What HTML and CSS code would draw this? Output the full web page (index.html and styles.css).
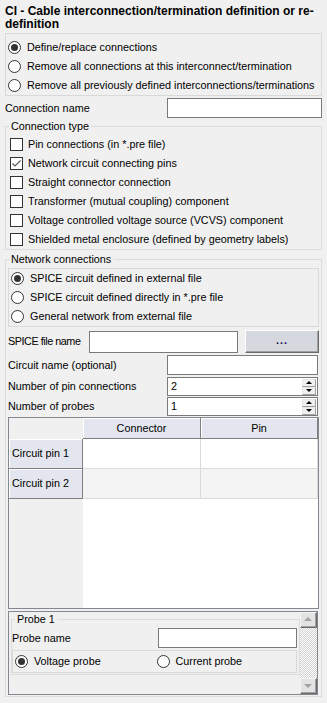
FILE: index.html
```html
<!DOCTYPE html>
<html lang="en">
<head>
  <meta charset="UTF-8" />
  <meta name="viewport" content="width=device-width, initial-scale=1" />
  <title>CI - Cable interconnection/termination</title>
  <link rel="stylesheet" href="styles.css">
</head>
<body>
<div class="panel">
  <h1 class="title">CI - Cable interconnection/termination definition or re-<br>definition</h1>

  <!-- Action -->
  <div class="choice-box mode-box">
    <div class="choice"><span class="radio on"></span>Define/replace connections</div>
    <div class="choice"><span class="radio"></span>Remove all connections at this interconnect/termination</div>
    <div class="choice"><span class="radio"></span>Remove all previously defined interconnections/terminations</div>
  </div>

  <div class="form-row name-row">
    <span class="name-label">Connection name</span>
    <input class="text-input" type="text">
  </div>

  <!-- Connection type -->
  <fieldset class="group type-group">
    <legend>Connection type</legend>
    <div class="choice"><span class="check"></span>Pin connections (in *.pre file)</div>
    <div class="choice">
      <span class="check"><svg width="11" height="11" viewBox="0 0 11 11"><polyline points="1.5,5.5 4,8 9.5,2.5" fill="none" stroke="#555" stroke-width="1.1"/></svg></span>Network circuit connecting pins
    </div>
    <div class="choice"><span class="check"></span>Straight connector connection</div>
    <div class="choice"><span class="check"></span>Transformer (mutual coupling) component</div>
    <div class="choice"><span class="check"></span>Voltage controlled voltage source (VCVS) component</div>
    <div class="choice"><span class="check"></span>Shielded metal enclosure (defined by geometry labels)</div>
  </fieldset>

  <!-- Network connections -->
  <fieldset class="group network-group">
    <legend>Network connections</legend>
    <div class="choice-box">
      <div class="choice"><span class="radio on"></span>SPICE circuit defined in external file</div>
      <div class="choice"><span class="radio"></span>SPICE circuit defined directly in *.pre file</div>
      <div class="choice"><span class="radio"></span>General network from external file</div>
    </div>

    <div class="form-row file-row">
      <span class="file-label">SPICE file name</span>
      <input class="text-input file-input" type="text">
      <button class="browse" type="button">...</button>
    </div>
    <div class="form-row circuit-row">
      <span class="form-label">Circuit name (optional)</span>
      <input class="text-input" type="text">
    </div>
    <div class="form-row spin-row">
      <span class="form-label">Number of pin connections</span>
      <div class="spin">
        <span class="spin-value">2</span>
        <span class="spin-arrows"><span class="spin-btn up"></span><span class="spin-btn down"></span></span>
      </div>
    </div>
    <div class="form-row spin-row">
      <span class="form-label">Number of probes</span>
      <div class="spin">
        <span class="spin-value">1</span>
        <span class="spin-arrows"><span class="spin-btn up"></span><span class="spin-btn down"></span></span>
      </div>
    </div>

    <div class="pin-grid">
      <div class="corner"></div>
      <div class="col-head">Connector</div>
      <div class="col-head">Pin</div>
      <div class="row-head">Circuit pin 1</div>
      <div class="cell"></div>
      <div class="cell"></div>
      <div class="row-head">Circuit pin 2</div>
      <div class="cell alt"></div>
      <div class="cell alt"></div>
      <div class="filler-head"></div>
      <div class="filler"></div>
    </div>

    <div class="probe-frame">
      <div class="probe-view">
        <fieldset class="group probe-group">
          <legend>Probe 1</legend>
          <div class="form-row probe-row">
            <span class="probe-label">Probe name</span>
            <input class="text-input" type="text">
          </div>
          <div class="choice-box probe-kind">
            <div class="choice"><span class="radio on"></span>Voltage probe</div>
            <div class="choice"><span class="radio"></span>Current probe</div>
          </div>
        </fieldset>
      </div>
      <div class="scrollbar">
        <span class="scroll-btn up"></span>
        <span class="scroll-track"></span>
        <span class="scroll-btn down"></span>
      </div>
    </div>
  </fieldset>
</div>
</body>
</html>
```
FILE: styles.css
```css
body {
  margin: 0;
  background: #f0f0f0;
  color: #000;
  font: 10.8px/13px "Liberation Sans", Arial, sans-serif;
}

.panel {
  padding: 0 5px;
}

.title {
  margin: 0 0 2px;
  padding-top: 5px;
  font-size: 12px;
  line-height: 13px;
  font-weight: bold;
}

/* radio / checkbox rows */
.choice-box {
  border: 1px solid #d9d9d9;
}

.mode-box {
  padding-top: 4px;
}

.choice {
  display: flex;
  align-items: center;
  height: 19px;
  white-space: nowrap;
}

.radio {
  position: relative;
  flex: none;
  box-sizing: border-box;
  width: 13px;
  height: 13px;
  margin: 0 6px 0 2px;
  border: 1px solid #333;
  border-radius: 50%;
  background: #fff;
}

.radio.on::after {
  content: "";
  position: absolute;
  left: 2px;
  top: 2px;
  width: 7px;
  height: 7px;
  border-radius: 50%;
  background: #333;
}

.check {
  flex: none;
  box-sizing: border-box;
  width: 13px;
  height: 13px;
  margin: 0 5px 0 2px;
  border: 1px solid #333;
  background: #fff;
}

.check svg {
  display: block;
}

/* group boxes */
.group {
  margin: 0;
  min-width: 0;
  border: 1px solid #dcdcdc;
}

.group legend {
  margin-left: 3px;
  padding: 0 2px;
  line-height: 14px;
}

.type-group {
  margin-top: 1px;
  padding: 2px 0 0 2px;
}

.type-group legend {
  margin-left: 1px;
}

.network-group {
  margin-top: 2px;
  padding: 2px 2px 1px;
}

.network-group legend {
  margin-left: 1px;
}

/* form rows */
.form-row {
  display: flex;
  align-items: center;
}

.name-row {
  height: 20px;
  margin-top: 2px;
}

.name-label {
  width: 162px;
  flex: none;
}

.form-label {
  width: 159px;
  flex: none;
}

.text-input {
  flex: 1;
  min-width: 0;
  width: 0;
  box-sizing: border-box;
  height: 100%;
  margin: 0;
  padding: 0 3px;
  border: 1px solid #7a7a7a;
  border-radius: 0;
  background: #fff;
  font: inherit;
}

.file-row {
  height: 23px;
  margin-top: 3px;
  align-items: flex-end;
}

.file-label {
  width: 81px;
  flex: none;
  align-self: center;
  white-space: nowrap;
  letter-spacing: -0.45px;
}

.file-input {
  flex: none;
  width: 149px;
  height: 22px;
}

.browse {
  flex: none;
  box-sizing: border-box;
  width: 74px;
  height: 23px;
  margin: 0 1px 0 7px;
  padding: 0 0 3px;
  border: 1px solid;
  border-color: #fff #6a6a6a #6a6a6a #fff;
  box-shadow: inset -1px -1px #a0a0a0;
  background: #d5d8df;
  color: #10104a;
  font: bold 10.8px "Liberation Sans", Arial, sans-serif;
  letter-spacing: 1px;
}

.circuit-row {
  height: 20px;
  margin-top: 2px;
}

.circuit-row .text-input,
.spin {
  margin-right: 1px;
}

.spin-row {
  height: 19px;
  margin-top: 1px;
}

.circuit-row + .spin-row {
  margin-top: 2px;
}

.spin {
  flex: 1;
  display: flex;
  align-items: center;
  box-sizing: border-box;
  height: 100%;
  padding-left: 3px;
  border: 1px solid #7a7a7a;
  background: #fff;
}

.spin-arrows {
  display: flex;
  flex-direction: column;
  margin-left: auto;
  margin-right: 1px;
}

.spin-btn {
  position: relative;
  box-sizing: border-box;
  width: 14px;
  height: 8px;
  border: 1px solid;
  border-color: #e8e8e8 #a0a0a0 #a0a0a0 #e8e8e8;
  background: #f0f0f0;
}

.spin-btn::after {
  content: "";
  position: absolute;
  left: 3px;
  border-left: 3px solid transparent;
  border-right: 3px solid transparent;
}

.spin-btn.up::after {
  top: 1px;
  border-bottom: 3px solid #000;
}

.spin-btn.down::after {
  top: 1px;
  border-top: 3px solid #000;
}

/* pin table */
.pin-grid {
  display: grid;
  grid-template-columns: 74px 118px 1fr;
  grid-template-rows: 21px 30px 30px 1fr;
  box-sizing: border-box;
  height: 192px;
  margin-top: 1px;
  border: 1px solid #828790;
  background: #fff;
}

.corner,
.filler-head {
  background: #f0f0f0;
}

.col-head,
.row-head {
  display: flex;
  align-items: center;
  border-right: 1px solid #7f7f7f;
  border-bottom: 1px solid #7f7f7f;
  box-shadow: inset 1px 1px #fff;
  background: #e3e6ee;
}

.col-head {
  justify-content: center;
}

.row-head {
  padding-left: 3px;
}

.cell {
  border-right: 1px solid #dadada;
  border-bottom: 1px solid #dadada;
  background: #fff;
}

.cell.alt {
  background: #f4f4f4;
}

.filler {
  grid-column: 2 / 4;
  background: #fff;
}

/* probe area */
.probe-frame {
  display: flex;
  box-sizing: border-box;
  height: 84px;
  margin: 2px 1px 0 0;
  border: 1px solid #828790;
}

.probe-view {
  flex: 1;
  min-width: 0;
  padding-left: 2px;
}

.probe-group {
  padding: 2px 2px 1px 0;
}

.probe-group legend {
  margin-left: 3px;
}

.probe-row {
  height: 20px;
}

.probe-label {
  width: 146px;
  flex: none;
}

.probe-kind {
  display: grid;
  grid-template-columns: 1fr 1fr;
  height: 23px;
  box-sizing: border-box;
  margin-top: 2px;
  align-items: center;
}

.scrollbar {
  display: flex;
  flex: none;
  flex-direction: column;
  width: 17px;
}

.scroll-btn {
  position: relative;
  box-sizing: border-box;
  height: 16px;
  border: 1px solid;
  border-color: #f4f4f4 #6a6a6a #6a6a6a #f4f4f4;
  box-shadow: inset -1px -1px #a0a0a0;
  background: #e3e3e3;
}

.scroll-btn::after {
  content: "";
  position: absolute;
  left: 3px;
  border-left: 4px solid transparent;
  border-right: 4px solid transparent;
}

.scroll-btn.up::after {
  top: 4px;
  border-bottom: 4px solid #a3a3a3;
}

.scroll-btn.down::after {
  top: 5px;
  border-top: 4px solid #a3a3a3;
}

.scroll-track {
  flex: 1;
  background: repeating-conic-gradient(#d0d0d0 0 25%, #fff 0 50%) 0 0 / 2px 2px;
}
```
